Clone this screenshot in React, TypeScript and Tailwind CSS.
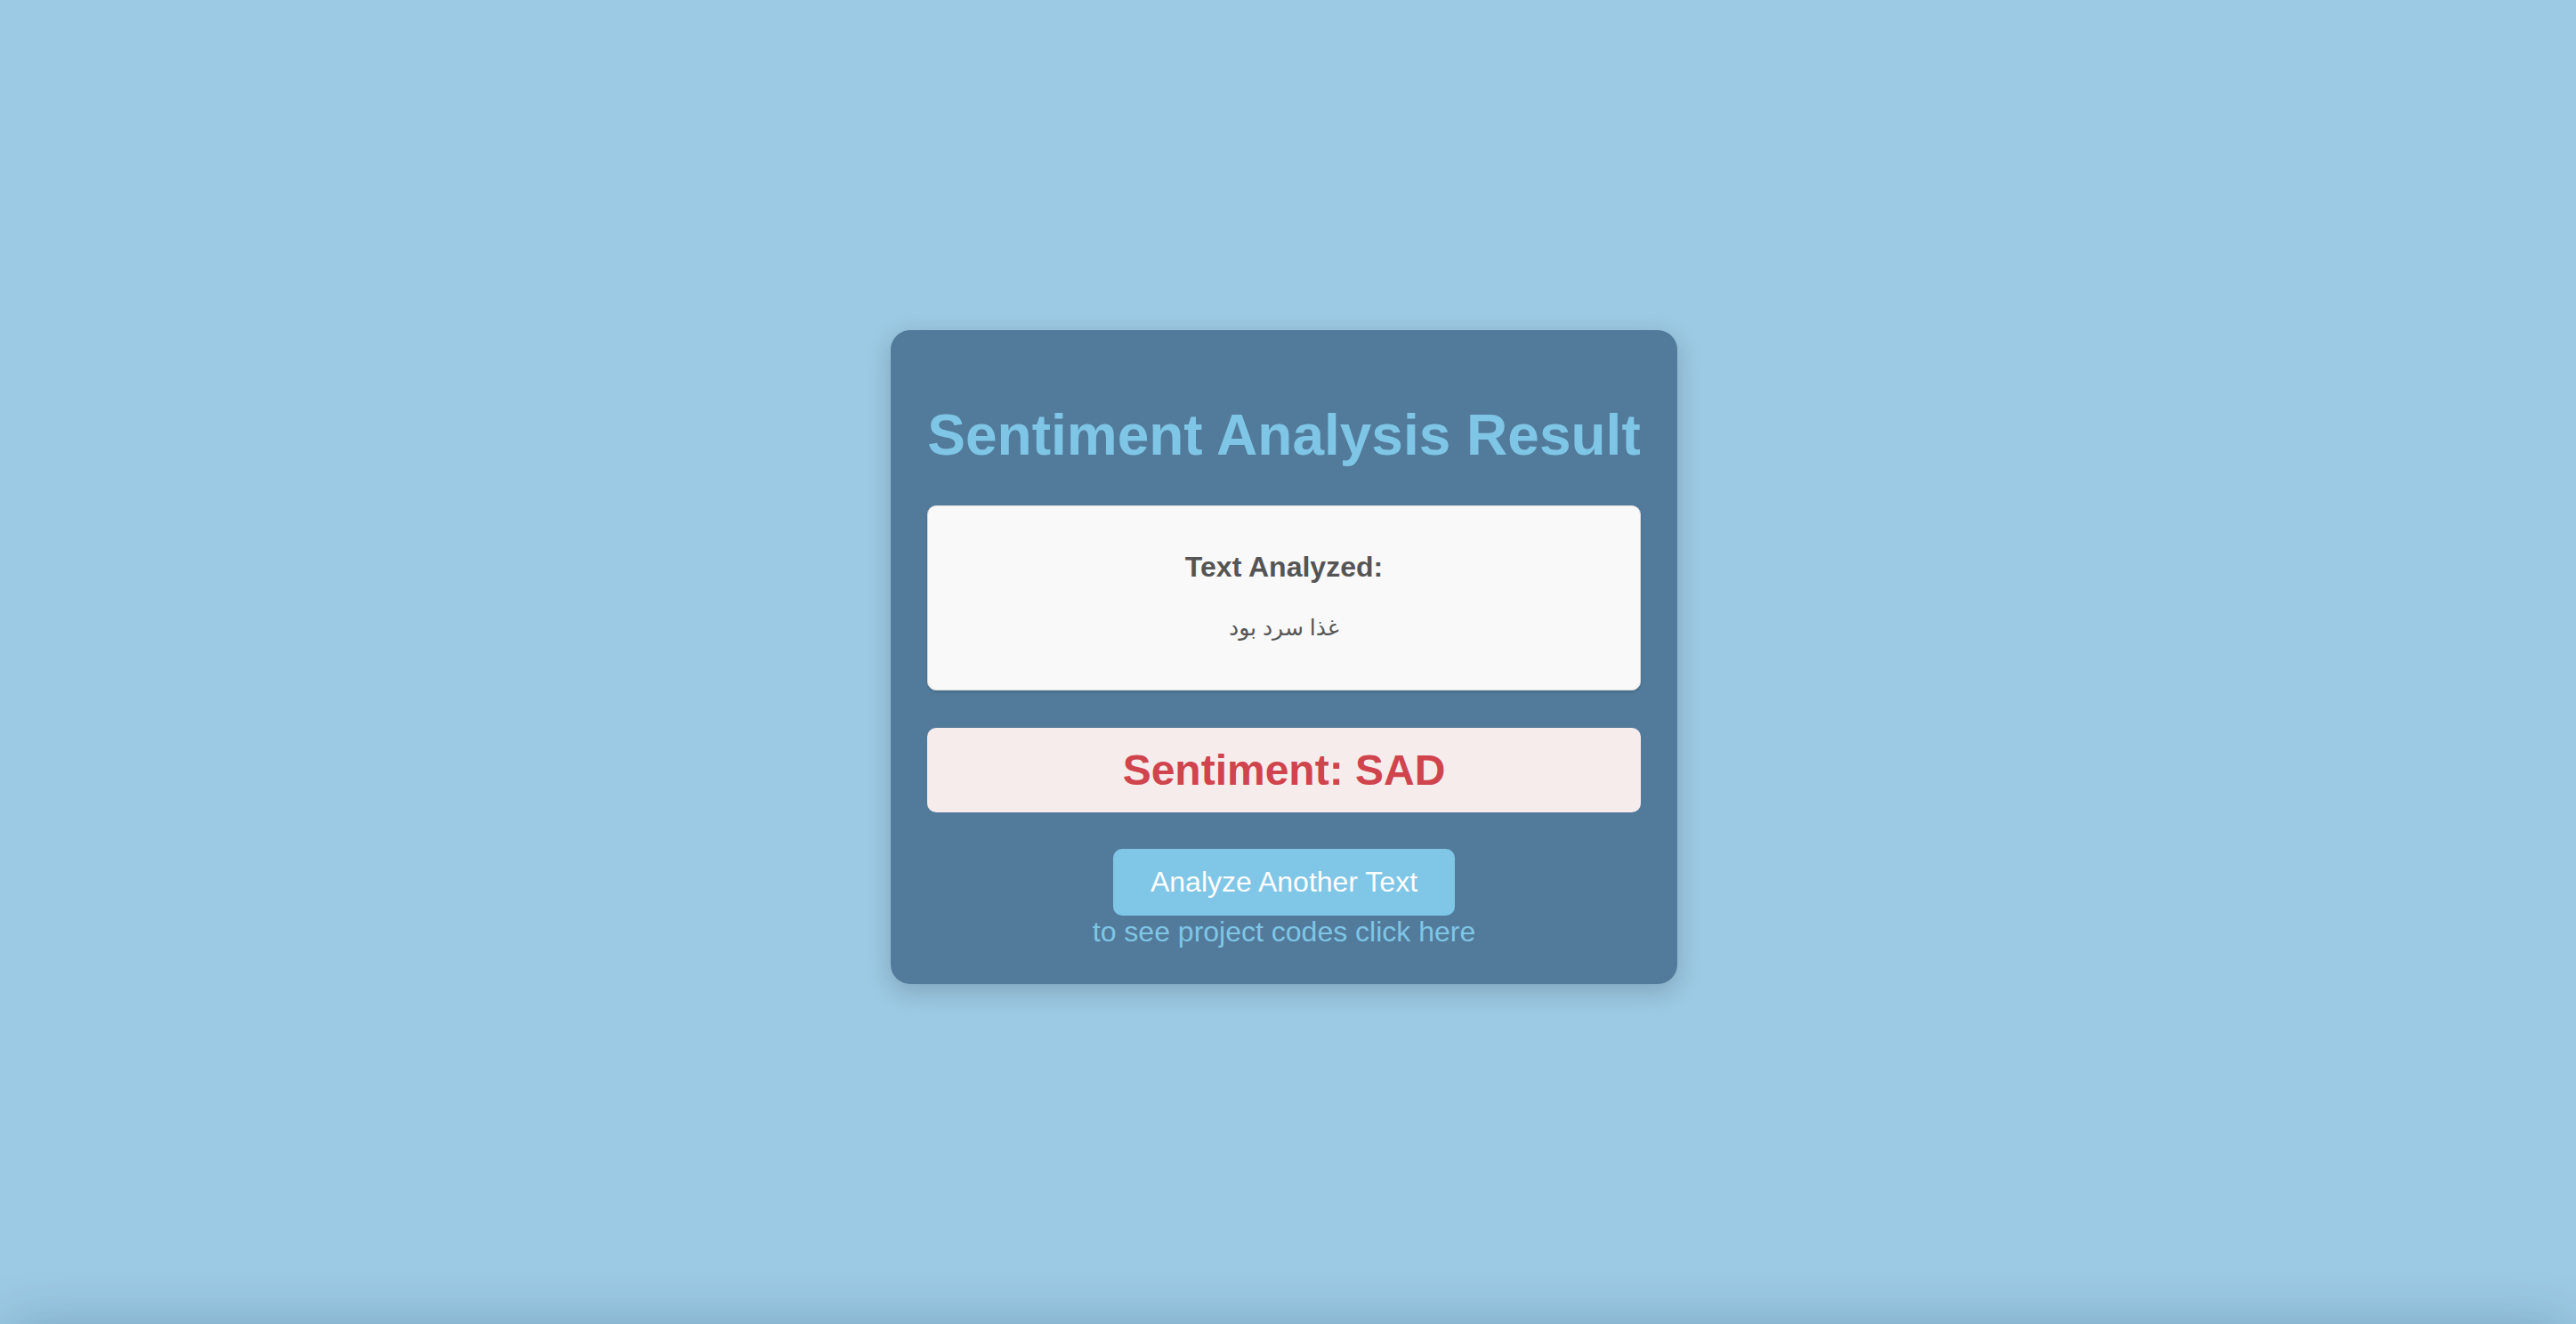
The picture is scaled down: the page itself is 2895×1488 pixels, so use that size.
import React from "react";

const ResultCard = () => {
  return (
    <div className="w-[884px] rounded-[22px] bg-[#527a9a] px-[41px] pt-[41px] pb-[40px] text-center shadow-[0_8px_28px_rgba(0,0,0,0.18)]">
      {/* Title */}
      <h1 className="-mx-[6px] mt-[40px] mb-[42px] whitespace-nowrap text-[64px] leading-[74px] font-bold text-[#7fc6e6]">
        Sentiment Analysis Result
      </h1>

      {/* Analyzed text */}
      <div className="rounded-[10px] border border-[#dcdcdc] bg-[#f9f9f9] pt-[50px] pb-[51px] shadow-[0_2px_3px_rgba(0,0,0,0.12)]">
        <h3 className="text-[32px] leading-[37px] font-bold text-[#555555]">Text Analyzed:</h3>
        <p
          dir="rtl"
          className="mt-[31px] text-[25px] leading-[37px] text-[#555555] font-['Liberation_Sans','DejaVu_Sans',sans-serif]"
        >
          غذا سرد بود
        </p>
      </div>

      {/* Sentiment */}
      <div className="mt-[42px] rounded-[10px] bg-[#f7ecec] py-[20px]">
        <h2 className="text-[48px] leading-[55px] font-bold text-[#cf444d]">Sentiment: SAD</h2>
      </div>

      {/* Actions */}
      <div className="mt-[41px] flex flex-col items-center">
        <button className="rounded-[10px] bg-[#80c6e6] px-[42px] py-[19px] text-[32px] leading-[37px] text-white">
          Analyze Another Text
        </button>
        <a href="#" className="text-[32px] leading-[37px] text-[#7fc6e6]">
          to see project codes click here
        </a>
      </div>
    </div>
  );
};

const App = () => {
  return (
    <div className="flex h-screen flex-col overflow-hidden bg-[#9cc9e3] font-['Liberation_Sans',Arial,sans-serif]">
      <main className="flex h-screen shrink-0 items-center justify-center pb-[12px] pr-[9px]">
        <ResultCard />
      </main>
      {/* page edge below the fold, only its shadow shows */}
      <footer className="mx-[10px] h-[120px] shrink-0 bg-[#9cc9e3] shadow-[0_0_60px_rgba(0,40,80,0.22)]"></footer>
    </div>
  );
};

export default App;
